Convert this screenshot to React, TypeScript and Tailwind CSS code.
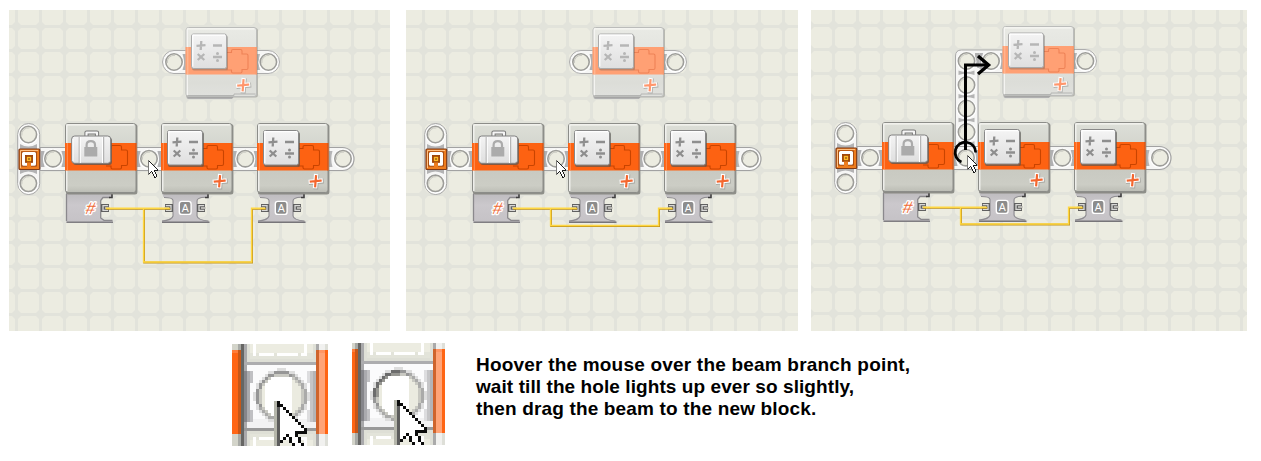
import React from "react";

type Pt = { x: number; y: number };

function Hole({ x, y }: Pt) {
  return (
    <g>
      <circle cx={x} cy={y + 0.4} r={9.3} fill="none" stroke="#ffffff" strokeWidth={1.4} />
      <circle cx={x} cy={y} r={8.2} fill="#ecece1" stroke="#9d9d99" strokeWidth={1.6} />
      <path d={`M${x - 6.6} ${y + 1}A6.7 6.7 0 0 1 ${x + 1} ${y - 6.6}`} fill="none" stroke="#c9c9c2" strokeWidth={1} />
    </g>
  );
}

function Lugs({ x, y }: Pt) {
  return (
    <g fill="#b0b0b2">
      <path d={`M${x - 12} ${y - 8}h3.6q-2.8 8 0 16h-3.6z`} />
      <path d={`M${x + 12} ${y - 8}h-3.6q2.8 8 0 16h3.6z`} />
    </g>
  );
}

function VerticalLug({ x, y }: Pt) {
  return <path d={`M${x - 8} ${y - 2.3}q8 3 16 0v4.6q-8 -3 -16 0z`} fill="#b4b4b4" />;
}

function Puzzle({ color }: { color: string }) {
  return (
    <path
      d="M41 25.500h5v-1.500q0-1.500 1.500-1.500h7.500q1.500 0 1.500 1.500v3h4.500q1.500 0 1.500 1.500v12.500q0 1.500-1.500 1.500h-4.500v2q0 1.500-1.500 1.500h-7.500q-1.500 0-1.500-1.500v-1.500h-5"
      fill="none"
      stroke={color}
      strokeWidth={1.1}
    />
  );
}

function Plus({ x, y, color }: Pt & { color: string }) {
  const d = `M${x - 4.7} ${y + 0.6}l9.800-1M${x + 0.5} ${y - 4.8}l-.8 10`;
  return (
    <g fill="none" strokeLinecap="square">
      <path d={d} stroke="#8c8c88" strokeWidth={5} transform="translate(.6 .7)" opacity={0.55} />
      <path d={d} stroke="#ffffff" strokeWidth={4.4} />
      <path d={d} stroke={color} strokeWidth={2.2} />
    </g>
  );
}

function Calculator({ x, y, ghost }: Pt & { ghost?: boolean }) {
  const c = ghost ? "#b6b6b6" : "#8e8e8e";
  return (
    <g transform={`translate(${x} ${y})`}>
      <rect x={1} y={2} width={36} height={35} rx={2} fill="#55534f" opacity={ghost ? 0.35 : 0.65} />
      <rect x={0.5} y={0.5} width={35} height={34.5} rx={2} fill="url(#tile)" stroke={ghost ? "#aaaaaa" : "#888888"} />
      <path d="M1.800 33V1.700H34" fill="none" stroke="#ffffff" strokeWidth={1.2} />
      <g stroke={c} strokeWidth={2.3} fill="none">
        <path d="M5.500 12.300l9-.6M10.300 7.500l-.6 9M22 12h9" />
        <path d="M6.700 20.500l6.600 6M13.300 20.500l-6.600 6M22 23.500h9" />
      </g>
      <circle cx={26.5} cy={20} r={1.5} fill={c} />
      <circle cx={26.5} cy={27} r={1.5} fill={c} />
    </g>
  );
}

function Suitcase({ x, y }: Pt) {
  return (
    <g transform={`translate(${x} ${y})`}>
      <path d="M15.500 6.500V2.500h10.500v4" fill="none" stroke="#777777" strokeWidth={4.2} strokeLinejoin="round" />
      <path d="M15.500 6.500V2.500h10.500v4" fill="none" stroke="#f6f6f6" strokeWidth={2.2} strokeLinejoin="round" />
      <rect x={2} y={7.5} width={39} height={27.5} rx={3} fill="#5c5650" opacity={0.75} />
      <rect x={0.7} y={6} width={39} height={27.3} rx={3} fill="url(#tile)" stroke="#808080" />
      <path d="M8.200 7v26M32.700 7v26" stroke="#a8a8a8" />
      <path d="M9.300 7v26M31.500 7v26M2 9v22" stroke="#ffffff" />
      <path d="M15.600 18.500v-3.500q0-3.800 4.200-3.800t4.200 3.800v3.500" fill="none" stroke="#ababab" strokeWidth={2.2} />
      <path d="M13.300 17h13v9.500h-13z" fill="#ababab" />
    </g>
  );
}

function Body({ x, y, ghost }: Pt & { ghost?: boolean }) {
  return (
    <g transform={`translate(${x} ${y})`}>
      {ghost && <path d="M1 66h47v4l-1.500 2H3q-2 0-2-2z" fill="#b0b0b1" />}
      <rect x={0.9} y={1} width={71.5} height={ghost ? 69.5 : 70.5} rx={2.5} fill="#85857f" opacity={ghost ? 0.5 : 0.9} />
      <rect x={0.5} y={0.5} width={70.5} height={69} rx={2.5} fill={ghost ? "url(#ghostBody)" : "url(#body)"} stroke={ghost ? "#bbbcba" : "#8c8d89"} />
      <path d="M1.800 68V1.800h67" fill="none" stroke="#f7f7f4" strokeWidth={1.2} />
      <rect x={0} y={20} width={71.5} height={27.5} fill={ghost ? "#ffa074" : "#fd6212"} />
      <path d="M2.300 20v27.500" stroke={ghost ? "#ffbd9c" : "#ff9258"} />
      <path d="M70.800 20v27.500" stroke={ghost ? "#ec9670" : "#cc5820"} />
      {ghost && <path d="M2 68.500h46.500v-1.500H70" fill="none" stroke="#b4b5b3" />}
      <Puzzle color={ghost ? "#ee8256" : "#c94400"} />
    </g>
  );
}

function Port({ x, y, flip }: Pt & { flip?: boolean }) {
  return (
    <g transform={`translate(${x} ${y}) ${flip ? "scale(-1 1)" : ""}`}>
      <rect x={-4} y={-4} width={8} height={8} fill="#606060" />
      <path d="M3.200-2.300h-5.200v4.600h5.200" fill="none" stroke="#d9d9d7" strokeWidth={1.3} />
      <rect x={0} y={-1} width={4.5} height={2} fill="#b5b4b0" />
    </g>
  );
}

function DataHub({ x }: { x: number }) {
  return (
    <g transform={`translate(${x} 193)`}>
      <path d="M1 0h46v3.500l-3 1q-7 0-7.500 3v15q0 4 11 5.500v2H1v-2.500q10-1.500 11-5V7.500q0-3-9.500-3.500z" fill="url(#hub)" />
      <path d="M1 28q10-.8 11-5V7.500q0-3-9-3M47.500 28q-11-1-11.500-5V8q0-3.500 8-3.700" fill="none" stroke="#8f8d91" strokeWidth={1.1} />
      <path d="M1 29.300h47.500" stroke="#777579" strokeWidth={1.5} />
      <path d="M44 4.500h3V1" fill="none" stroke="#3f3e3f" strokeWidth={1.6} />
      <Port x={8} y={15} flip />
      <Port x={40} y={15} />
      <rect x={18.3} y={8.4} width={11.8} height={13} rx={2.5} fill="#8c8c8c" stroke="#ffffff" strokeWidth={1.4} />
      <text x={24.2} y={18.5} textAnchor="middle" fill="#ffffff" className="font-['Liberation_Sans'] text-[10.5px]">
        A
      </text>
    </g>
  );
}

function VariableHub() {
  return (
    <g transform="translate(65 193)">
      <path d="M1 0h46v3.500l-3 1.300h-6l-2.500 3v17.500l4 2h8v2.500H1.500z" fill="url(#hub)" />
      <path d="M45 4.500h-7l-2.300 3V25l3.300 2.300h8.500M1.500 1v27" fill="none" stroke="#8b898d" strokeWidth={1.3} />
      <path d="M1.500 29.300H48" stroke="#807e82" strokeWidth={1.5} />
      <path d="M44 4.500h3V1" fill="none" stroke="#3f3e3f" strokeWidth={1.6} />
      <Port x={40} y={15} />
      <g transform="translate(24.500 20.700) skewX(-12)">
        <text
          textAnchor="middle"
          fill="#ee6a35"
          stroke="#ffffff"
          strokeWidth={2.6}
          paintOrder="stroke"
          strokeLinejoin="round"
          className="font-['Liberation_Sans'] text-[17px]"
        >
          #
        </text>
      </g>
    </g>
  );
}

function Wire({ d }: { d: string }) {
  return (
    <g fill="none">
      <path d={d} stroke="#c0931c" strokeWidth={1.8} transform="translate(.3 .5)" />
      <path d={d} stroke="#ffd742" strokeWidth={1.5} transform="translate(-.2 0)" />
    </g>
  );
}

const cursorRows = [
  "X",
  "XX",
  "X.X",
  "X..X",
  "X...X",
  "X....X",
  "X.....X",
  "X......X",
  "X.......X",
  "X........X",
  "X.....XXXX",
  "X..X..X",
  "X.X X..X",
  "XX  X..X",
  "X    X..X",
  "     X..X",
  "      X.X",
  "      XX",
];

function Cursor({ x, y }: Pt) {
  return (
    <g transform={`translate(${x} ${y})`} shapeRendering="crispEdges">
      {cursorRows.flatMap((row, r) =>
        row.split("").map((c, i) =>
          c === " " ? null : (
            <rect key={`${r}-${i}`} x={i} y={r} width={1} height={1} fill={c === "." ? "#ffffff" : i === 0 ? "#7a7a78" : "#1c1c1c"} />
          ),
        ),
      )}
    </g>
  );
}

function StartMark() {
  return (
    <g>
      <rect x={17.7} y={123.5} width={22} height={71} rx={11} fill="#f6f6f5" stroke="#a5a5a5" />
      <path d="M20 144q8.400 5 17 0v5H20zM20 174q8.400-5 17 0v-5H20z" fill="#b3b3b4" />
      <Hole x={28.4} y={134.5} />
      <Hole x={28.4} y={183.3} />
      <rect x={19} y={149} width={20.7} height={20.5} rx={1} fill="#ee7d1e" stroke="#7d3a18" strokeWidth={1.2} />
      <path d="M20.500 168V150.500h17.500" fill="none" stroke="#ffc183" />
      <path d="M27 164.300h-3.500v-10.700h11v10.700h-3.500" fill="none" stroke="#8f3c0c" strokeWidth={4.4} />
      <path d="M27 164.300h-3.500v-10.700h11v10.700h-3.500" fill="none" stroke="#ffffff" strokeWidth={3} strokeLinejoin="round" />
      <rect x={26.2} y={156.2} width={5.6} height={5.6} fill="#ffba28" stroke="#9b4608" strokeWidth={1.2} />
      <rect x={28.2} y={158.2} width={1.6} height={1.6} fill="#8a5418" />
    </g>
  );
}

function Scene({ width, drop, dy, branch, cursor }: { width: number; drop: number; dy: number; branch?: boolean; cursor: Pt }) {
  const left = width === 381 ? 9 : width === 392 ? -1 : -6;
  return (
    <svg width={width} height={321} viewBox={`${left} ${10 + dy} ${width} 321`} className="block shrink-0 overflow-hidden">
      <defs>
        <pattern id="grid" x={15} y={25} width={24} height={24} patternUnits="userSpaceOnUse">
          <rect width={24} height={24} fill="#e2e3db" />
          <path d="M6 3h15l3 3v15l-3 3H6l-3-3V6z" fill="#ecece1" />
        </pattern>
        <linearGradient id="body" x1="0" y1="0" x2="0" y2="1">
          <stop offset="0" stopColor="#dddfd8" />
          <stop offset=".7" stopColor="#c9cac2" />
          <stop offset=".9" stopColor="#cccdc5" />
          <stop offset="1" stopColor="#bcbdb5" />
        </linearGradient>
        <linearGradient id="ghostBody" x1="0" y1="0" x2="0" y2="1">
          <stop offset="0" stopColor="#e9eae5" />
          <stop offset=".8" stopColor="#dcddd8" />
          <stop offset="1" stopColor="#e0e1dd" />
        </linearGradient>
        <linearGradient id="tile" x1="0" y1="0" x2="0" y2="1">
          <stop offset="0" stopColor="#f4f4f4" />
          <stop offset="1" stopColor="#dfdfdf" />
        </linearGradient>
        <linearGradient id="hub" x1="0" y1="0" x2="0" y2="1">
          <stop offset="0" stopColor="#bdbbbe" />
          <stop offset=".4" stopColor="#cbc8cc" />
          <stop offset="1" stopColor="#c5c2c6" />
        </linearGradient>
      </defs>
      <rect x={-10} y={0} width={460} height={340} fill="url(#grid)" />

      {branch ? (
        <g>
          <path d="M138.500 148V57q0-6 6-6H186v22.500H161V148z" fill="#f6f6f5" stroke="#a9a9a9" />
          <Lugs x={174.5} y={62} />
          <path d="M158 54h4.500v15h-2q-3-6-2.500-15z" fill="#b0b0b0" />
          {[73.7, 97.3, 121, 144.5].map((y) => (
            <VerticalLug key={y} x={149.5} y={y} />
          ))}
          {[62, 86, 109.5, 133].map((y) => (
            <Hole key={y} x={149.5} y={y} />
          ))}
        </g>
      ) : (
        <g>
          <path d="M187 50.500h-13a11.500 11.500 0 0 0 0 23h13z" fill="#f6f6f5" stroke="#adadad" />
          <path d="M186 54h-3.500q2.800 8 0 16h3.500z" fill="#b0b0b2" />
        </g>
      )}
      <Hole x={174} y={62} />
      <path d="M256 50.500h12a11.500 11.500 0 0 1 0 23h-12z" fill="#f6f6f5" stroke="#adadad" />
      <path d="M257 54h3q-2.500 8 0 16h-3z" fill="#b5b5b5" />
      <Hole x={268.4} y={62} />
      <Body x={185.5} y={27} ghost />
      <Calculator x={191} y={33.5} ghost />
      <Plus x={243} y={85} color="#ff966c" />

      <path d="M40 147.500h302.500a11.500 11.500 0 0 1 0 23H40z" fill="#f6f6f5" stroke="#a2a2a2" strokeWidth={1.2} />
      {[53, 149, 245.3].map((x) => (
        <g key={x}>
          <Lugs x={x} y={159} />
          <Hole x={x} y={158.7} />
        </g>
      ))}
      <path d="M329 151h3.500q-2.500 8 0 16H329z" fill="#b5b5b6" />
      <Hole x={343} y={158.7} />
      <StartMark />

      <VariableHub />
      <DataHub x={161} />
      <DataHub x={257} />
      <Body x={65} y={123} />
      <Suitcase x={71} y={130} />
      <Body x={161} y={123} />
      <Calculator x={167} y={130} />
      <Plus x={219.5} y={181} color="#f4662e" />
      <Body x={257} y={123} />
      <Calculator x={263} y={130} />
      <Plus x={315.5} y={181} color="#f4662e" />

      <Wire d={`M106 208.300H170M143.800 208.300V${drop}H251.800V208.300H265.500`} />

      {branch && (
        <g fill="none" stroke="#000000">
          <path d="M148.500 151V66H171" strokeWidth={3} />
          <path d="M161 57l10.500 9-10.500 9" strokeWidth={3.4} />
          <path d="M144.500 163A10.300 10.300 0 1 1 158.700 153.500" strokeWidth={2.7} />
        </g>
      )}
      <Cursor x={cursor.x} y={cursor.y} />
    </svg>
  );
}

function insetColor(c: number, r: number, shift: number, lit: boolean): string {
  const cr = r - 19;
  const cc = c - 15;
  if (cr >= 0) {
    const ch = (cursorRows[cr] ?? "")[cc];
    if (ch === "X") return cc === 0 && cr > 1 ? "#5c5c5c" : "#0c0c0c";
    if (ch === ".") return "#ffffff";
    if (cc === -1) return "#b5b6ab";
  }
  const x = c + shift;
  if (x <= 2) {
    if (x === 2) return r < 2 || r > 29 ? "#a8aaa6" : "#c65718";
    return r < 2 || r > 29 ? "#d3d4ca" : r === 2 ? "#ff7d3a" : "#ff6514";
  }
  if (x === 3) return "#666664";
  if (x >= 28) {
    const orange = r >= 2 && r <= 29;
    if (x === 28) return orange ? "#cf642c" : "#aaaaaa";
    if (x === 31) return orange ? "#ff6514" : "#dedfd8";
    return orange ? (r === 2 ? "#ff9664" : "#ffa477") : "#f1f1ef";
  }
  if (r === 6 || r === 28) return r === 6 ? "#adadaf" : "#999999";
  if (x === 4) return r > 8 && r < 26 ? "#85858a" : "#a9a9ab";
  if (r < 6 || r > 28) {
    const edge = r < 6 ? r : 34 - r;
    if (x < 6 || x > 26) return "#dfe0d7";
    if (edge === 5) return "#dedfd6";
    if (edge === 3 && x > 8 && x < 25 && x % 8 !== 6) return "#ffffff";
    if ((x === 7 || x === 24) && edge < 4) return "#ffffff";
    return edge < 3 ? "#ecece1" : "#e3e4da";
  }
  const d = Math.hypot(x - 16, r - 17);
  if (d < 6.9) return x > 10 && x < 20 ? "#ffffff" : "#ebebe0";
  if (d < 8.4) {
    const dark = lit && x < 17 && r < 18;
    if (d < 7.5) return dark ? "#979792" : "#c9c9c2";
    return dark ? "#6c6c6c" : x + r < 30 ? "#969696" : "#aaaaa9";
  }
  if (d < 9.1) return "#dddddd";
  if (r > 8 && r < 26) {
    if (x === 5) return "#aaaaae";
    if (x === 6 && (r < 13 || r > 21)) return "#c0c0c3";
    if (x === 27) return "#b4b4b6";
    if (x === 26) return "#c5c5c7";
    if (x === 25 && (r < 13 || r > 21)) return "#dddddf";
  }
  return r > 24 ? "#f2f2f3" : "#fbfbfc";
}

function Inset({ columns, shift, lit }: { columns: number; shift: number; lit: boolean }) {
  const cells = Array.from({ length: 34 * columns }, (_, i) => ({ c: i % columns, r: Math.floor(i / columns) }));
  return (
    <svg width={columns * 3} height={102} viewBox={`0 0 ${columns} 34`} shapeRendering="crispEdges" className="block shrink-0">
      {cells.map(({ c, r }) => (
        <rect key={`${c}-${r}`} x={c} y={r} width={1} height={1} fill={insetColor(c, r, shift, lit)} />
      ))}
    </svg>
  );
}

export default function App() {
  return (
    <main className="flex h-[461px] w-[1261px] flex-col overflow-hidden bg-white pt-[10px] font-['Liberation_Sans',sans-serif]">
      <section className="flex pl-[9px]">
        <Scene width={381} dy={0} drop={262} cursor={{ x: 148, y: 160 }} />
        <div className="w-4 shrink-0" />
        <Scene width={392} dy={0} drop={225.5} cursor={{ x: 149, y: 160 }} />
        <div className="w-[13px] shrink-0" />
        <Scene width={436} dy={1} drop={225} branch cursor={{ x: 150, y: 156 }} />
      </section>
      <section className="flex items-start pt-3 pl-[232px]">
        <div className="pt-px">
          <Inset columns={32} shift={0} lit={false} />
        </div>
        <div className="pl-6">
          <Inset columns={31} shift={1} lit />
        </div>
        <p className="pt-[11px] pl-[31px] text-[19px] leading-[22px] font-bold whitespace-nowrap text-black">
          <span className="tracking-[0.2px]">Hoover the mouse over the beam branch point,</span>
          <br />
          <span className="tracking-[0.08px]">wait till the hole lights up ever so slightly,</span>
          <br />
          <span className="tracking-[0.16px]">then drag the beam to the new block.</span>
        </p>
      </section>
    </main>
  );
}
